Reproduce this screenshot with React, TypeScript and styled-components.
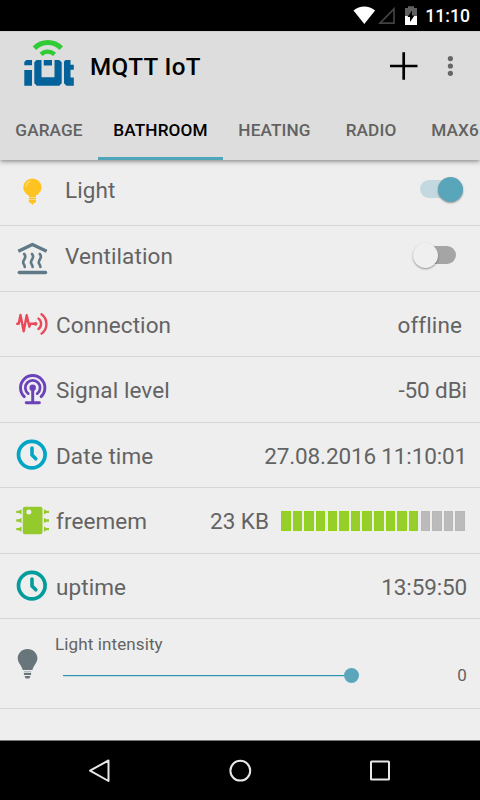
import React from "react";
import styled, { createGlobalStyle } from "styled-components";

const GlobalStyle = createGlobalStyle`
  * { box-sizing: border-box; }
  body { margin: 0; background: #eee; font-family: Roboto, sans-serif; font-variant-ligatures: none; }
  svg { display: block; flex: none; }
`;

const Screen = styled.div`
  width: 480px;
  height: 800px;
  display: flex;
  flex-direction: column;
  overflow: hidden;
  background: #eee;
  color: #636363;
`;

const StatusBar = styled.div`
  height: 31px;
  flex: none;
  display: flex;
  align-items: center;
  justify-content: flex-end;
  background: #000;
  padding-right: 10px;
`;

const Clock = styled.span`
  margin-left: 6px;
  width: 45px;
  font-size: 17.6px;
  line-height: 22px;
  padding-top: 1px;
  font-weight: 500;
  color: #fff;
  text-align: right;
  white-space: nowrap;
`;

const Header = styled.header`
  height: 129px;
  flex: none;
  background: #ddd;
  box-shadow: 0 1px 5px rgba(0, 0, 0, 0.5);
  border-top: 1px solid #d0d0d0;
  z-index: 1;
`;

const Toolbar = styled.div`
  height: 68px;
  display: flex;
  align-items: center;
  padding-left: 20px;
`;

const Title = styled.h1`
  margin: 2px 0 0 10px;
  width: 296px;
  font-size: 24.2px;
  line-height: 28px;
  letter-spacing: 0.4px;
  font-weight: 500;
  color: #000;
`;

const Tabs = styled.nav`
  height: 60px;
  display: flex;
  overflow: hidden;
`;

const Tab = styled.div<{ $active?: boolean; $width: number }>`
  width: ${(p) => p.$width}px;
  flex: none;
  height: 60px;
  padding-top: 19px;
  font-size: 17.2px;
  letter-spacing: 0.12px;
  line-height: 22px;
  font-weight: 500;
  text-align: center;
  white-space: nowrap;
  color: ${(p) => (p.$active ? "#000" : "#626262")};
  border-bottom: 3px solid ${(p) => (p.$active ? "#4fa6bb" : "transparent")};
`;

const List = styled.main`
  flex: 1;
`;

const Row = styled.div<{ $height?: number }>`
  height: ${(p) => p.$height ?? 66}px;
  display: flex;
  align-items: flex-start;
  padding: 16px 13px 0 14px;
  border-bottom: 1px solid #d6d6d6;
`;

const Label = styled.span<{ $indent?: number; $drop?: number }>`
  flex: 1;
  padding-left: ${(p) => p.$indent ?? 6}px;
  margin-top: ${(p) => p.$drop ?? 3}px;
  font-size: 22.5px;
  letter-spacing: 0.1px;
  line-height: 28px;
  white-space: nowrap;
`;

const Value = styled.span<{ $gap?: number; $tracking?: number }>`
  margin-top: 3px;
  margin-right: ${(p) => p.$gap ?? 0}px;
  font-size: 22.5px;
  letter-spacing: ${(p) => p.$tracking ?? 0}px;
  line-height: 28px;
  white-space: nowrap;
`;

const Track = styled.span<{ $on?: boolean }>`
  display: flex;
  align-items: center;
  justify-content: ${(p) => (p.$on ? "flex-end" : "flex-start")};
  width: 36px;
  height: 18px;
  border-radius: 9px;
  background: ${(p) => (p.$on ? "#c3d9df" : "#a5a5a5")};
  margin: 4px 11px 0 0;
`;

const Knob = styled.span<{ $on?: boolean }>`
  width: 25px;
  height: 25px;
  flex: none;
  border-radius: 50%;
  margin: ${(p) => (p.$on ? "0 -7px 0 0" : "0 0 0 -7px")};
  background: ${(p) => (p.$on ? "#59a5b9" : "#efefef")};
  box-shadow: 0 1px 2px rgba(0, 0, 0, 0.4);
`;

const Meter = styled.div`
  display: flex;
  justify-content: space-between;
  width: 184px;
  height: 20px;
  margin: 7px 2px 0 12px;
`;

const Segment = styled.span<{ $filled: boolean }>`
  width: 9.5px;
  background: ${(p) => (p.$filled ? "#96ce2c" : "#bbb")};
  border: 1px solid ${(p) => (p.$filled ? "#91d412" : "#b7b7b7")};
`;

const Dimmer = styled.div`
  display: flex;
  flex-direction: column;
  flex: 1;
  margin-top: -1px;
  padding-left: 5px;
`;

const Caption = styled.span`
  font-size: 17px;
  letter-spacing: 0.12px;
  line-height: 20px;
`;

const DimmerLine = styled.div`
  display: flex;
  align-items: center;
  height: 20px;
  margin-top: 11px;
  padding-left: 7.5px;
`;

const SliderTrack = styled.div`
  display: flex;
  align-items: center;
  flex: 1;
`;

const SliderFill = styled.span`
  width: 281px;
  height: 1px;
  background: #2e93af;
  box-shadow: 0 1px 0 #c5dce3;
`;

const SliderThumb = styled.span`
  width: 15px;
  height: 15px;
  border-radius: 50%;
  background: #5ba6bb;
`;

const NavBar = styled.footer`
  height: 60px;
  flex: none;
  display: flex;
  justify-content: center;
  align-items: center;
  gap: 116px;
  background: #000;
  border-top: 1px solid #777;
`;

const LogoBox = styled.div`
  margin-top: -6px;
`;

const Glyph = ({ children }: { children: React.ReactNode }) => (
  <svg width="36" height="36" viewBox="0 0 36 36" fill="none" strokeLinecap="round" strokeLinejoin="round">
    {children}
  </svg>
);

const BulbIcon = () => (
  <Glyph>
    <path d="M18.4 2.5a9 9 0 0 0-9.1 9c0 3.8 2.600 5.400 4 7.500h10.200c1.400-2.100 4-3.700 4-7.500a9 9 0 0 0-9.100-9z" fill="#ffc321" />
    <path d="M14.800 18.800h7.200v2.400h-7.200zM14.800 21.800h7.200v1.700h-7.200zM14.800 24.100h7.200v1.800l-1.400 1h-1l-.7 1.800h-1l-.7-1.800h-1l-1.400-1z" fill="#ffc321" />
    <path d="M12 10.400c.3-2.600 1.800-4.200 4-5" stroke="#ffda72" strokeWidth="1.400" />
  </Glyph>
);

const VentIcon = () => (
  <Glyph>
    <g stroke="#607986">
      <path d="M4.300 9.300 18.400 2.500l14.300 6.800" strokeWidth="3.300" strokeLinecap="butt" />
      <path d="M5.300 30.600h26.200" strokeWidth="3.500" />
      {[10.6, 18.4, 26.2].map((x) => (
        <path key={x} d={`M${x - 0.4} 12c4 4-3.300 6.500-.5 10 .6 1 1.100 2 1.100 3`} strokeWidth="2.600" />
      ))}
    </g>
  </Glyph>
);

const PulseIcon = () => (
  <Glyph>
    <g stroke="#e94a59" strokeWidth="2.400">
      <path d="M3.200 15.800h1.500L6.500 7l3.200 16.200L12.700 7.200l2.700 11.500 1.100-3h5" />
      <path d="M24.500 10.600a6.500 6.500 0 0 1 0 10.400M27.500 6.200a12 12 0 0 1 0 19.400" />
      <circle cx="21.600" cy="15.800" r="1.900" fill="#e94a59" stroke="none" />
    </g>
  </Glyph>
);

const TowerIcon = () => (
  <Glyph>
    <g stroke="#6a42b9" strokeWidth="2.900">
      <path d="M10.300 23.600a12.200 12.200 0 1 1 16.800 0" />
      <path d="M14.200 20.600a7.400 7.400 0 1 1 9 0" strokeWidth="2.700" />
      <path d="M18.700 15v14.500M12.200 29.800h13.200" />
      <circle cx="18.700" cy="14.700" r="3.200" fill="#6a42b9" stroke="none" />
    </g>
  </Glyph>
);

const ClockIcon = ({ color }: { color: string }) => (
  <Glyph>
    <g stroke={color}>
      <circle cx="17.800" cy="15.600" r="13.300" strokeWidth="3.700" />
      <path d="M18 9v7l3.800 3.800" strokeWidth="3.600" />
    </g>
  </Glyph>
);

const ChipIcon = () => (
  <Glyph>
    <rect x="8.800" y="2.800" width="19.700" height="27.500" rx="2.200" fill="#94ca2c" />
    <circle cx="14.900" cy="7.900" r="2.500" fill="#eee" />
    <g fill="#94ca2c">
      {[7.9, 16.5, 25.1].map((y) => (
        <g key={y}>
          <path d={`M7.500 ${y - 2.6}v5.200L4.900 ${y + 1.2}H2.300v-2.400H4.900z`} />
          <path d={`M29.900 ${y - 2.6}v5.200l2.600-1.400H35v-2.400h-2.500z`} />
        </g>
      ))}
    </g>
  </Glyph>
);

const DimBulbIcon = () => (
  <svg width="36" height="62" viewBox="0 0 36 62" fill="#68757b">
    <path d="M13.500 14c-5.600 0-9.800 4.300-9.800 9.300 0 4.500 3.800 6.800 5 11.700h9.700c1.200-4.900 5-7.200 5-11.700C23.400 18.300 19.100 14 13.500 14z" />
    <path d="M9.900 36h7.200v1.500H9.900z" fill="#b5babd" />
    <path d="M9.900 38h7.200v2H9.900zM10.500 41h6l-1.200 2.500h-3.600z" />
  </svg>
);

const Logo = () => (
  <LogoBox>
    <svg width="60" height="56" viewBox="20 35 60 56" fill="none">
      <path d="M34.500 48.200c7.500-7.600 19.300-7.600 26.700 0" stroke="#30cb35" strokeWidth="5" />
      <path d="M41 54.400c4-3.700 9.400-3.700 13.600 0" stroke="#30cb35" strokeWidth="4.500" />
      <g fill="#04629a">
        <path d="M26.300 60H32v5.300h-7.700V62zM24.300 70H32v15.700h-7.700z" />
        <path d="M36.500 60h5v17.200h13V60h4.700l2.500 2.300v20.900l-2.500 2.500H36.800l-2.500-2.500V62.300z" />
        <path d="M43.700 60h8.300v5.500h-8.300z" />
        <path d="M64 61.500l1.500-1.500h5v4.700h3.300v5h-3.300v7.800h3.300v8.200h-7.300L64 83.200z" />
      </g>
    </svg>
  </LogoBox>
);

const StatusIcons = () => (
  <svg width="66" height="22" viewBox="353 5 66 22">
    <path d="M353.500 10.500c6.300-5.300 15.300-5.300 21.600 0L364.300 24z" fill="#fff" />
    <path d="M380 23.200h14V8.800z" fill="none" stroke="#424242" strokeWidth="1.700" />
    <path d="M405 8h3V6.300h6V8h3v9h-12z" fill="#606060" />
    <path d="M405 16h12v9h-12z" fill="#fff" />
    <path d="M412 10.500v5h2.500L410 22v-5h-2.500z" fill="#000" />
  </svg>
);

const segments = Array.from({ length: 16 }, (_, i) => i < 12);

export default function App() {
  return (
    <>
      <GlobalStyle />
      <Screen>
        <StatusBar>
          <StatusIcons />
          <Clock>11:10</Clock>
        </StatusBar>
        <Header>
          <Toolbar>
            <Logo />
            <Title>MQTT IoT</Title>
            <svg width="90" height="40" viewBox="386 46 90 40">
              <path d="M390 66h27.500M403.700 52.200v27.500" stroke="#000" strokeWidth="2.700" />
              <g fill="#666">
                <circle cx="450.400" cy="58.600" r="2.600" />
                <circle cx="450.400" cy="66" r="2.600" />
                <circle cx="450.400" cy="73.300" r="2.600" />
              </g>
            </svg>
          </Toolbar>
          <Tabs>
            <Tab $width={98}>GARAGE</Tab>
            <Tab $width={125} $active>BATHROOM</Tab>
            <Tab $width={103}>HEATING</Tab>
            <Tab $width={90}>RADIO</Tab>
            <Tab $width={78}>MAX6</Tab>
          </Tabs>
        </Header>
        <List>
          <Row>
            <BulbIcon />
            <Label $indent={15} $drop={0}>Light</Label>
            <Track $on><Knob $on /></Track>
          </Row>
          <Row>
            <VentIcon />
            <Label $indent={15} $drop={0}>Ventilation</Label>
            <Track><Knob /></Track>
          </Row>
          <Row $height={65}>
            <PulseIcon />
            <Label>Connection</Label>
            <Value $gap={5} $tracking={0.1}>offline</Value>
          </Row>
          <Row>
            <TowerIcon />
            <Label>Signal level</Label>
            <Value $tracking={-0.1}>-50 dBi</Value>
          </Row>
          <Row $height={65}>
            <ClockIcon color="#02a5c4" />
            <Label>Date time</Label>
            <Value $tracking={-0.14}>27.08.2016 11:10:01</Value>
          </Row>
          <Row>
            <ChipIcon />
            <Label>freemem</Label>
            <Value>23 KB</Value>
            <Meter>
              {segments.map((filled, i) => (
                <Segment key={i} $filled={filled} />
              ))}
            </Meter>
          </Row>
          <Row $height={65}>
            <ClockIcon color="#029d9b" />
            <Label>uptime</Label>
            <Value $tracking={-0.14}>13:59:50</Value>
          </Row>
          <Row $height={90}>
            <DimBulbIcon />
            <Dimmer>
              <Caption>Light intensity</Caption>
              <DimmerLine>
                <SliderTrack>
                  <SliderFill />
                  <SliderThumb />
                </SliderTrack>
                <Caption>0</Caption>
              </DimmerLine>
            </Dimmer>
          </Row>
        </List>
        <NavBar>
          <svg width="24" height="24" viewBox="0 0 24 24" fill="none" stroke="#e8e8e8" strokeWidth="2">
            <path d="M20.500 1.500v20.500L2 11.700z" strokeLinejoin="round" />
          </svg>
          <svg width="24" height="24" viewBox="0 0 24 24" fill="none" stroke="#e8e8e8" strokeWidth="2">
            <circle cx="12.300" cy="11.700" r="9.900" />
          </svg>
          <svg width="24" height="24" viewBox="0 0 24 24" fill="none" stroke="#e8e8e8" strokeWidth="2">
            <rect x="3" y="2.500" width="18" height="18" rx="0.600" />
          </svg>
        </NavBar>
      </Screen>
    </>
  );
}
